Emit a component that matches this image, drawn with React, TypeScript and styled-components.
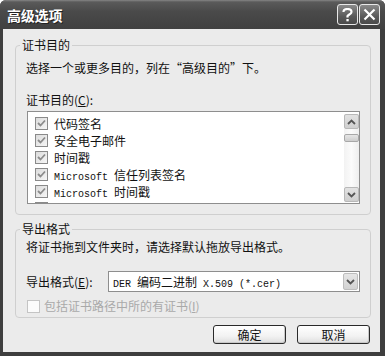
import React from "react";
import styled, { createGlobalStyle } from "styled-components";

const Global = createGlobalStyle`
  html, body { margin: 0; padding: 0; background: #ffffff; }
  body { font-family: "Noto Sans CJK SC", "Noto Sans", sans-serif; }
  * { box-sizing: border-box; }
`;

const FONT = `"Noto Sans CJK SC", "Noto Sans", sans-serif`;

const Window = styled.div`
  width: 385px;
  height: 356px;
  display: flex;
  flex-direction: column;
  background: #3e3e3e;
  border-radius: 6px 6px 0 0;
  overflow: hidden;
`;

const TitleBar = styled.div`
  height: 29px;
  flex: none;
  display: flex;
  align-items: center;
  padding: 0 5px 0 7px;
  background: linear-gradient(#858585 0, #5a5a5a 2px, #4a4a4a 40%, #404040 100%);
`;

const Title = styled.div`
  flex: 1;
  color: #fff;
  font-family: ${FONT};
  font-weight: 700;
  font-size: 14px;
  line-height: 16px;
  letter-spacing: -0.2px;
  text-shadow: 1px 1px 0 #222;
`;

const TitleButtons = styled.div`
  display: flex;
  gap: 1px;
`;

const TitleButton = styled.div`
  width: 21px;
  height: 21px;
  border: 1px solid #e8e8e8;
  border-radius: 3px;
  background: linear-gradient(#8a8a8a, #5a5a5a 60%, #4a4a4a);
  display: flex;
  align-items: center;
  justify-content: center;
  color: #fff;
`;

const Body = styled.div`
  flex: 1;
  margin: 0 5px 4px 3px;
  background: #ebebeb;
  padding: 8px 9px 0 12px;
  display: flex;
  flex-direction: column;
`;

const Group = styled.fieldset<{ $gap?: number }>`
  margin: ${(p) => p.$gap ?? 0}px 0 0 0;
  padding: 0 10px ${(p) => (p.$gap ? 3 : 10)}px 10px;
  border: 1px solid #cfcfcf;
  border-radius: 4px;
  min-width: 0;
`;

const Legend = styled.legend`
  margin-left: -6px;
  padding: 0 2px;
  font-family: ${FONT};
  font-size: 12px;
  line-height: 16px;
  color: #111;
`;

const Text = styled.div<{ $mt: number; $muted?: boolean }>`
  margin-top: ${(p) => p.$mt}px;
  font-family: ${FONT};
  font-size: 12px;
  line-height: 16px;
  color: ${(p) => (p.$muted ? "#a9a9a9" : "#111")};
  white-space: nowrap;
`;

const ListBox = styled.div`
  margin-top: 3px;
  margin-left: 1px;
  height: 93px;
  border: 1px solid #8e8e8e;
  background: #fff;
  display: flex;
  overflow: hidden;
`;

const ListItems = styled.div`
  flex: 1;
  padding: 3px 0 0 7px;
  overflow: hidden;
`;

const Row = styled.div`
  height: 17px;
  display: flex;
  align-items: center;
  gap: 6px;
  font-family: ${FONT};
  font-size: 12px;
  color: #111;
  white-space: nowrap;
`;

const Mono = styled.span`
  font-family: "Liberation Mono", "DejaVu Sans Mono", monospace;
  font-size: 10px;
  white-space: pre;
`;

const Box = styled.div<{ $disabled?: boolean }>`
  width: 13px;
  height: 13px;
  flex: none;
  border: 1px solid ${(p) => (p.$disabled ? "#c4c4c4" : "#8a8a8a")};
  background: ${(p) => (p.$disabled ? "#fbfbfb" : "linear-gradient(135deg, #dcdcdc, #f6f6f6)")};
  display: flex;
  align-items: center;
  justify-content: center;
`;

const ScrollBar = styled.div`
  width: 15px;
  flex: none;
  margin: 2px 0 1px 0;
  display: flex;
  flex-direction: column;
  background: linear-gradient(90deg, #f2f2f2, #fbfbfb 50%, #eeeeee);
`;

const ScrollBtn = styled.div`
  width: 15px;
  height: 15px;
  border: 1px solid #b8b8b8;
  border-radius: 2px;
  background: linear-gradient(#e2e2e2, #cfcfcf);
  display: flex;
  align-items: center;
  justify-content: center;
`;

const Thumb = styled.div`
  margin-top: 5px;
  height: 8px;
  border: 1px solid #a8a8a8;
  border-radius: 2px;
  background: linear-gradient(#e6e6e6, #cdcdcd);
`;

const Spacer = styled.div`
  flex: 1;
`;

const FormatRow = styled.div`
  margin-top: 16px;
  display: flex;
  align-items: center;
`;

const Label = styled.div`
  width: 82px;
  font-family: ${FONT};
  font-size: 12px;
  line-height: 16px;
  color: #111;
  white-space: nowrap;
`;

const Combo = styled.div`
  width: 252px;
  height: 21px;
  border: 1px solid #8e8e8e;
  background: #fff;
  display: flex;
  align-items: center;
  padding: 0 1px 0 4px;
`;

const ComboText = styled.div`
  flex: 1;
  font-family: ${FONT};
  font-size: 12px;
  color: #111;
  white-space: nowrap;
`;

const ComboBtn = styled.div`
  width: 15px;
  height: 17px;
  border: 1px solid #bdbdbd;
  border-radius: 2px;
  background: linear-gradient(#e6e6e6, #d2d2d2);
  display: flex;
  align-items: center;
  justify-content: center;
`;

const CheckRow = styled.div`
  margin-top: 6px;
  display: flex;
  align-items: center;
  gap: 4px;
  padding-left: 1px;
`;

const Buttons = styled.div`
  margin-top: 7px;
  display: flex;
  justify-content: flex-end;
  gap: 11px;
  padding-right: 1px;
`;

const Button = styled.button`
  width: 73px;
  height: 19px;
  padding: 0;
  border: 1px solid #2a2a2a;
  border-radius: 3px;
  background: linear-gradient(#ffffff, #f2f2f2 60%, #dedede);
  box-shadow: inset -1px -1px 0 #c8c8c8;
  font-family: ${FONT};
  font-size: 12px;
  line-height: 16px;
  color: #111;
`;

const Check = () => (
  <svg width="9" height="9" viewBox="0 0 9 9">
    <path d="M1 4 L3.5 6.5 L8 1.5" fill="none" stroke="#8c8c8c" strokeWidth="1.8" />
  </svg>
);

const Up = () => (
  <svg width="9" height="6" viewBox="0 0 9 6">
    <path d="M1 5 L4.5 1.5 L8 5" fill="none" stroke="#555" strokeWidth="1.8" />
  </svg>
);

const Down = () => (
  <svg width="9" height="6" viewBox="0 0 9 6">
    <path d="M1 1 L4.5 4.5 L8 1" fill="none" stroke="#555" strokeWidth="1.8" />
  </svg>
);

const items: React.ReactNode[] = [
  "代码签名",
  "安全电子邮件",
  "时间戳",
  <><Mono>{"Microsoft "}</Mono>信任列表签名</>,
  <><Mono>{"Microsoft "}</Mono>时间戳</>,
  <><Mono>{"IP "}</Mono>安全终端系统</>,
];

export default function App() {
  return (
    <Window>
      <Global />
      <TitleBar>
        <Title>高级选项</Title>
        <TitleButtons>
          <TitleButton>
            <svg width="11" height="14" viewBox="0 0 11 14">
              <path d="M1.5 4 C1.5 1.5 3.5 1 5.5 1 C7.5 1 9.5 2 9.5 4 C9.5 6 6.5 6.5 5.5 8 L5.5 9.5" fill="none" stroke="#fff" strokeWidth="2.2" />
              <rect x="4.4" y="11" width="2.3" height="2.3" fill="#fff" />
            </svg>
          </TitleButton>
          <TitleButton>
            <svg width="13" height="13" viewBox="0 0 13 13">
              <path d="M1.5 1.5 L11.5 11.5 M11.5 1.5 L1.5 11.5" stroke="#fff" strokeWidth="2.2" />
            </svg>
          </TitleButton>
        </TitleButtons>
      </TitleBar>
      <Body>
        <Group>
          <Legend>证书目的</Legend>
          <Text $mt={7}>选择一个或更多目的，列在“高级目的”下。</Text>
          <Text $mt={16}>证书目的(<u>C</u>):</Text>
          <ListBox>
            <ListItems>
              {items.map((it, i) => (
                <Row key={i}>
                  <Box><Check /></Box>
                  <span>{it}</span>
                </Row>
              ))}
            </ListItems>
            <ScrollBar>
              <ScrollBtn><Up /></ScrollBtn>
              <Thumb />
              <Spacer />
              <ScrollBtn><Down /></ScrollBtn>
            </ScrollBar>
          </ListBox>
        </Group>
        <Group $gap={6}>
          <Legend>导出格式</Legend>
          <Text $mt={2}>将证书拖到文件夹时，请选择默认拖放导出格式。</Text>
          <FormatRow>
            <Label>导出格式(<u>E</u>):</Label>
            <Combo>
              <ComboText><Mono>{"DER "}</Mono>编码二进制<Mono>{" X.509 (*.cer)"}</Mono></ComboText>
              <ComboBtn><Down /></ComboBtn>
            </Combo>
          </FormatRow>
          <CheckRow>
            <Box $disabled />
            <Text $mt={0} $muted>包括证书路径中所的有证书(<u>I</u>)</Text>
          </CheckRow>
        </Group>
        <Buttons>
          <Button>确定</Button>
          <Button>取消</Button>
        </Buttons>
      </Body>
    </Window>
  );
}
